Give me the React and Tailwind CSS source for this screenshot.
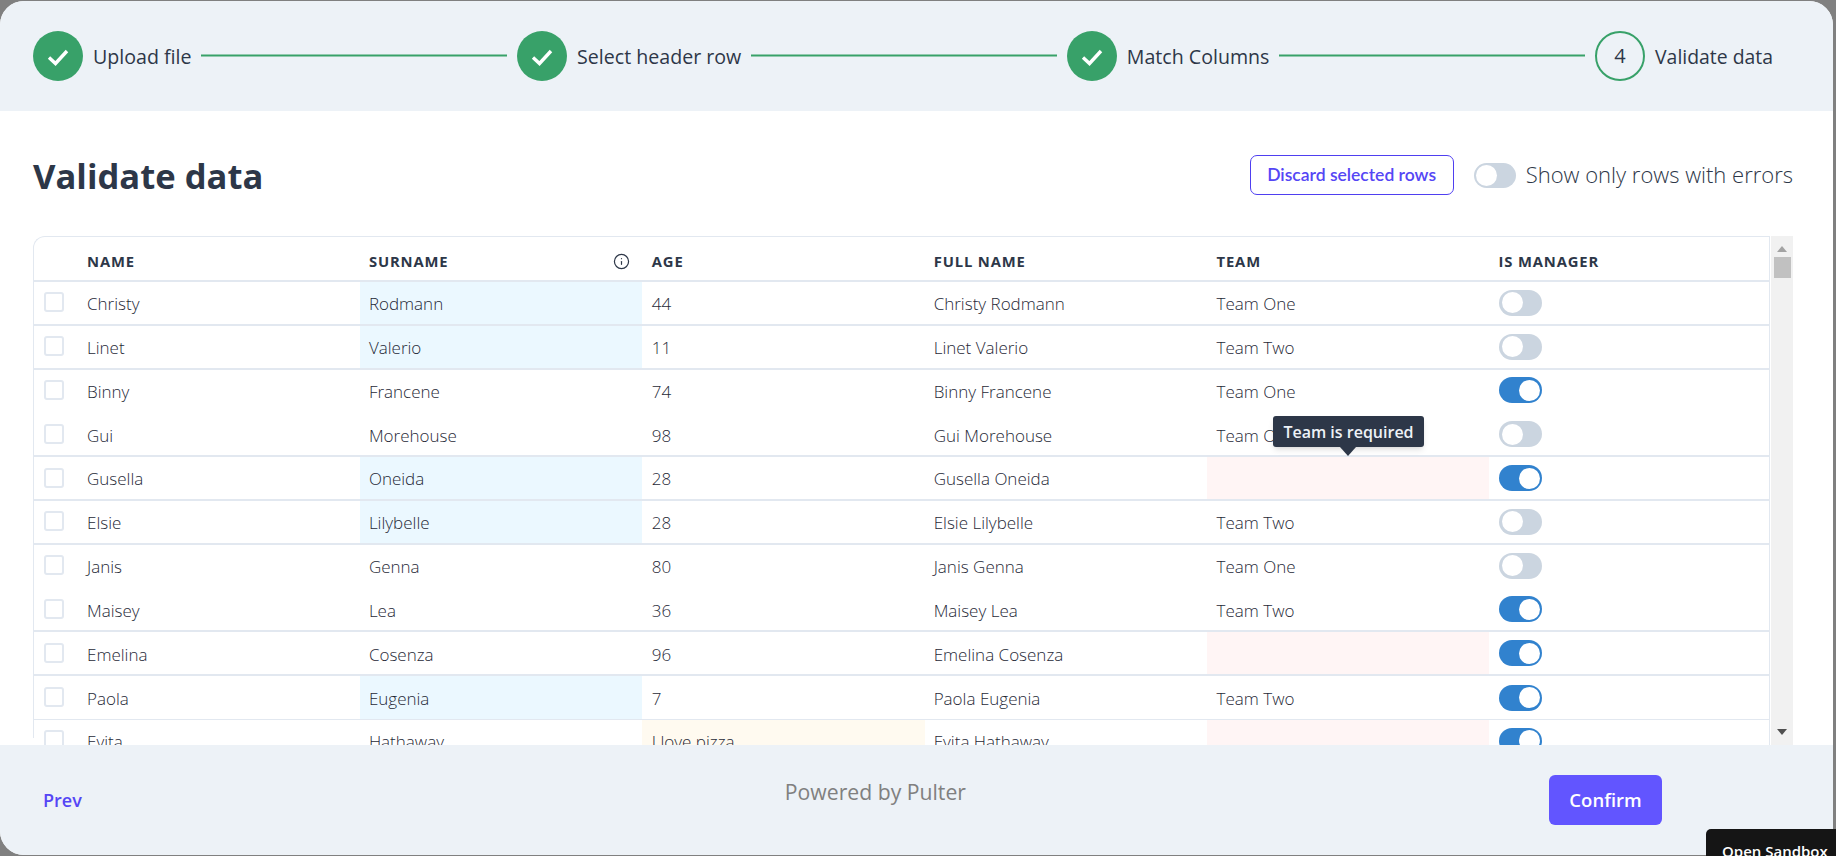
import React from "react";
import { Info } from "lucide-react";

const rows = [
  { n: "Christy", s: "Rodmann", a: "44", t: "Team One", m: false, sb: true, line: "border-b-2 border-[#e2e8f0]" },
  { n: "Linet", s: "Valerio", a: "11", t: "Team Two", m: false, sb: true, line: "border-b-2 border-[#e2e8f0]" },
  { n: "Binny", s: "Francene", a: "74", t: "Team One", m: true, line: "border-b-2 border-transparent" },
  { n: "Gui", s: "Morehouse", a: "98", t: "Team One", m: false, line: "border-b-2 border-[#e2e8f0]" },
  { n: "Gusella", s: "Oneida", a: "28", t: "", m: true, sb: true, err: true, line: "border-b-2 border-[#e2e8f0]" },
  { n: "Elsie", s: "Lilybelle", a: "28", t: "Team Two", m: false, sb: true, line: "border-b-2 border-[#e2e8f0]" },
  { n: "Janis", s: "Genna", a: "80", t: "Team One", m: false, line: "border-b-2 border-transparent" },
  { n: "Maisey", s: "Lea", a: "36", t: "Team Two", m: true, line: "border-b-2 border-[#e2e8f0]" },
  { n: "Emelina", s: "Cosenza", a: "96", t: "", m: true, err: true, line: "border-b-2 border-[#e2e8f0]" },
  { n: "Paola", s: "Eugenia", a: "7", t: "Team Two", m: true, sb: true, line: "border-b border-[#e2e8f0]" },
  { n: "Evita", s: "Hathaway", a: "I love pizza", t: "", m: true, err: true, yb: true, line: "border-b-2 border-[#e2e8f0]" },
];

const gridCols = "grid grid-cols-[43.5px_repeat(5,282.4px)_1fr]";

function Toggle({ on }) {
  return (
    <span className={`flex h-[26px] w-[43px] items-center rounded-full p-[2.5px] ${on ? "justify-end bg-[#3182ce]" : "justify-start bg-[#cbd5e0]"}`}>
      <span className="h-[21px] w-[21px] rounded-full bg-white" />
    </span>
  );
}

function StepDone({ label }) {
  return (
    <>
      <span className="flex h-[50px] w-[50px] shrink-0 items-center justify-center rounded-full bg-[#38a169]">
        <svg className="translate-y-px" width="22" height="18" viewBox="0 0 22 18" fill="none">
          <path d="M2 9.5 L8.5 15.5 L20 3" stroke="#fff" strokeWidth="3.4" />
        </svg>
      </span>
      <span className="ml-[10px] shrink-0 translate-y-px text-[19.6px] font-medium text-[#2d3748]">{label}</span>
    </>
  );
}

function Line() {
  return <span className="mx-[10px] h-[2px] flex-1 -translate-y-[0.5px] bg-[#38a169]" />;
}

export default function App() {
  return (
    <div className="relative h-screen overflow-hidden bg-[#808080] pt-px pr-[3px] pb-px font-['Open_Sans',sans-serif]">
      <div className="flex h-full flex-col overflow-hidden rounded-[24px] bg-white">
        <header className="flex h-[110px] shrink-0 items-center bg-[#edf2f7] pr-[60px] pl-[33px]">
          <StepDone label="Upload file" />
          <Line />
          <StepDone label="Select header row" />
          <Line />
          <StepDone label="Match Columns" />
          <Line />
          <span className="flex h-[50px] w-[50px] shrink-0 items-center justify-center rounded-full border-2 border-[#38a169] text-[20px] font-normal text-[#2d3748]">4</span>
          <span className="ml-[10px] shrink-0 translate-y-px text-[19.4px] font-medium text-[#2d3748]">Validate data</span>
        </header>

        <div className="flex h-[125px] shrink-0 items-center pt-1 pr-[40px] pl-[33px]">
          <h1 className="text-[34.6px] font-bold text-[#2d3748]">Validate data</h1>
          <button className="ml-auto flex h-[40px] w-[204px] -translate-y-px items-center justify-center rounded-[7px] border-[1.5px] border-[#4f3ff0] pt-px font-['Lato',sans-serif] text-[17.5px] font-semibold text-[#5546f5]">Discard selected rows</button>
          <span className="ml-[20px] flex h-[25px] w-[42px] items-center rounded-full bg-[#cbd5e0] p-[2px]">
            <span className="h-[21px] w-[21px] rounded-full bg-white" />
          </span>
          <span className="ml-[10px] -translate-y-px text-[22px] font-light text-[#2d3748]">Show only rows with errors</span>
        </div>

        <section className="mr-[40px] ml-[33px] flex h-[509px] shrink-0 overflow-hidden">
          <div className="min-w-0 flex-1 border-r border-[#e2e8f0]">
            <div className="h-[502px] rounded-tl-[12px] border-t border-l border-[#e2e8f0] text-[#1f2937]">
              <div className={`${gridCols} h-[45px] items-center border-b-2 border-[#e2e8f0] pt-[6px] text-[14.8px] font-bold tracking-[0.85px] text-[#2d3748]`}>
                <span />
                <span className="pl-[9.5px]">NAME</span>
                <span className="flex items-center justify-between pr-[12px] pl-[9px]">SURNAME<Info size={17} strokeWidth={1.7} /></span>
                <span className="pl-[9.5px]">AGE</span>
                <span className="pl-[9px]">FULL NAME</span>
                <span className="pl-[9.5px]">TEAM</span>
                <span className="pl-[9px]">IS MANAGER</span>
              </div>
              {rows.map((r) => (
                <div key={r.n} className={`${gridCols} h-[43.8px] text-[17px] font-light ${r.line}`}>
                  <span className="flex items-center pb-px pl-[10px]">
                    <span className="h-[20px] w-[20px] rounded-[3px] border-2 border-[#e2e8f0]" />
                  </span>
                  <span className="flex items-center pt-[2px] pl-[9.5px]">{r.n}</span>
                  <span className={`flex items-center pt-[2px] pl-[9px] ${r.sb ? "bg-[#ebf8ff]" : ""}`}>{r.s}</span>
                  <span className={`flex items-center pt-[2px] pl-[9.5px] ${r.yb ? "bg-[#fffaf0]" : ""}`}>{r.a}</span>
                  <span className="flex items-center pt-[2px] pl-[9px]">{r.n} {r.s}</span>
                  <span className={`flex items-center pt-[2px] pl-[9.5px] ${r.err ? "bg-[#fff5f5]" : ""}`}>{r.t}</span>
                  <span className="flex items-center pl-[10px]"><Toggle on={r.m} /></span>
                </div>
              ))}
            </div>
          </div>
          <div className="ml-px flex w-[22px] shrink-0 flex-col items-center bg-[#f1f1f1] pt-[10px] pb-[10px]">
            <svg width="10" height="6" viewBox="0 0 10 6"><path d="M5 0 L10 6 L0 6 Z" fill="#a3a3a3" /></svg>
            <span className="mt-[5px] h-[21px] w-[17px] bg-[#c1c1c1]" />
            <svg className="mt-auto" width="10" height="6" viewBox="0 0 10 6"><path d="M0 0 L10 0 L5 6 Z" fill="#505050" /></svg>
          </div>
        </section>

        <footer className="flex min-h-0 flex-1 items-center justify-between bg-[#edf2f7] pr-[171px] pl-[43px]">
          <span className="text-[18px] font-semibold text-[#5546f5]">Prev</span>
          <span className="ml-[120px] pb-[16px] text-[21.2px] text-[#808080]">Powered by Pulter</span>
          <button className="h-[50px] w-[113px] rounded-[6px] bg-[#6255ff] text-[18.5px] font-semibold text-white">Confirm</button>
        </footer>
      </div>

      <div className="absolute top-[416px] left-[1273px] flex h-[31px] w-[151px] items-center justify-center rounded-[3px] bg-[#2d3748] text-[16px] font-semibold text-[#edf2f7] shadow-md">
        Team is required
        <span className="absolute top-full left-[75px] h-0 w-0 -translate-x-1/2 border-x-[8px] border-t-[9px] border-x-transparent border-t-[#2d3748]" />
      </div>
      <div className="absolute top-[829px] left-[1706px] h-[40px] w-[130px] rounded-tl-[5px] bg-[#151515] pt-[11px] pl-[16px] text-[15px] font-semibold text-white">Open Sandbox</div>
    </div>
  );
}
